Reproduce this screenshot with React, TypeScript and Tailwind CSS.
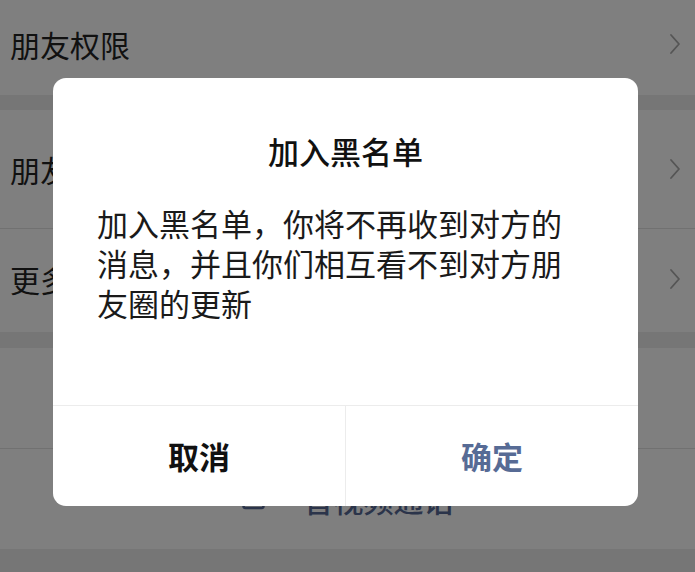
import React from "react";

const font = { fontFamily: '"Noto Sans CJK SC", "Noto Sans", sans-serif' };

function Chevron() {
  return (
    <svg width="12" height="24" viewBox="0 0 12 24" fill="none" className="mr-[14px]">
      <path d="M2 3 L10 12 L2 21" stroke="#555" strokeWidth="1.8" strokeLinecap="round" strokeLinejoin="round" />
    </svg>
  );
}

function Row({ label, h, chevron = true, line = false }: { label: string; h: string; chevron?: boolean; line?: boolean }) {
  return (
    <div className={`flex items-center justify-between bg-[#7f7f7f] pl-[10px] ${h} ${line ? "border-b border-[#717171]" : ""}`}>
      <span className="text-[30px] leading-none text-[#111]">{label}</span>
      {chevron && <Chevron />}
    </div>
  );
}

export default function App() {
  return (
    <div className="relative h-[572px] w-[695px] overflow-hidden bg-[#767676]" style={font}>
      <div className="flex flex-col">
        <Row label="朋友权限" h="h-[95px] pb-[8px]" />
        <div className="h-[15px] bg-[#767676]" />
        <Row label="朋友圈和视频动态" h="h-[119px]" line />
        <Row label="更多信息" h="h-[103px] pb-[4px]" />
        <div className="h-[16px] bg-[#767676]" />
        <div className="flex h-[101px] items-center justify-center border-b border-[#717171] bg-[#7f7f7f]" />
        <div className="flex h-[100px] items-center justify-center gap-[32px] bg-[#7f7f7f]">
          <svg width="30" height="22" viewBox="0 0 30 22" fill="none">
            <rect x="1.5" y="2" width="20" height="18" rx="2" stroke="#2b344a" strokeWidth="2.5" />
            <path d="M22 9 L28 5 L28 17 L22 13 Z" fill="#2b344a" />
          </svg>
          <span className="text-[30px] font-medium leading-none text-[#2b344a]">音视频通话</span>
        </div>
        <div className="h-[22px] bg-[#767676]" />
      </div>

      <div className="absolute left-[53px] top-[78px] flex h-[428px] w-[585px] flex-col rounded-[13px] bg-white">
        <div className="flex flex-1 flex-col px-[44px] pt-[53px]">
          <div className="text-center text-[31px] font-medium leading-[40px] text-[#111]">加入黑名单</div>
          <div className="mt-[32px] text-[31px] leading-[40px] text-[#1a1a1a]">
            加入黑名单，你将不再收到对方的
            <br />
            消息，并且你们相互看不到对方朋
            <br />
            友圈的更新
          </div>
        </div>
        <div className="flex h-[101px] border-t border-[#ececec]">
          <div className="flex flex-1 items-center justify-center border-r border-[#ececec] text-[31px] font-bold text-[#111]">
            取消
          </div>
          <div className="flex flex-1 items-center justify-center text-[31px] font-bold text-[#576b95]">
            确定
          </div>
        </div>
      </div>
    </div>
  );
}
